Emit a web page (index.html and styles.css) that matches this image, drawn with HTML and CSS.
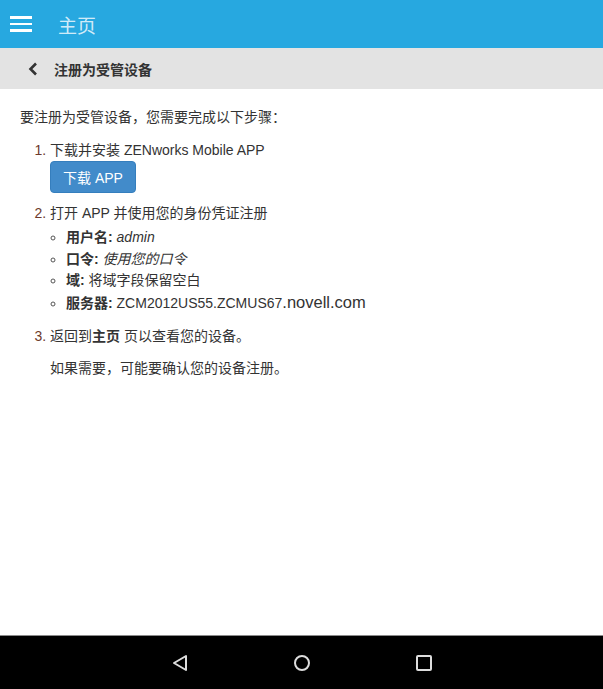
FILE: index.html
```html
<!DOCTYPE html>
<html lang="zh-CN">
<head>
<meta charset="UTF-8">
<meta name="viewport" content="width=device-width, initial-scale=1.0">
<title>主页</title>
<link rel="stylesheet" href="styles.css">
</head>
<body>
    <div class="app">
        <div class="topbar">
            <div class="menu-btn">
                <span></span><span></span><span></span>
            </div>
            <div class="topbar-title">主页</div>
        </div>
        <div class="subbar">
            <svg class="back" width="12" height="14" viewBox="0 0 12 14">
                <path d="M9 1.5 L3.5 7 L9 12.5" fill="none" stroke="#333" stroke-width="2.6"/>
            </svg>
            <span class="subbar-title">注册为受管设备</span>
        </div>
        <div class="content">
            <p class="intro">要注册为受管设备，您需要完成以下步骤：</p>
            <ol class="steps">
                <li>
                    下载并安装 ZENworks Mobile APP<br>
                    <button class="btn">下载 APP</button>
                </li>
                <li>
                    打开 APP 并使用您的身份凭证注册
                    <ul class="creds">
                        <li><b>用户名:</b> <i>admin</i></li>
                        <li><b>口令:</b> <i>使用您的口令</i></li>
                        <li><b>域:</b> 将域字段保留空白</li>
                        <li><b>服务器:</b> ZCM2012US55.ZCMUS67<span class="domain">.novell.com</span></li>
                    </ul>
                </li>
                <li>
                    返回到<b>主页</b> 页以查看您的设备。
                    <p class="note">如果需要，可能要确认您的设备注册。</p>
                </li>
            </ol>
        </div>
        <div class="navbar">
            <svg width="20" height="20" viewBox="0 0 20 20">
                <path d="M16 3 L16 17 L4 10 Z" fill="none" stroke="#ddd" stroke-width="2" stroke-linejoin="round"/>
            </svg>
            <svg width="20" height="20" viewBox="0 0 20 20">
                <circle cx="10" cy="10" r="7" fill="none" stroke="#ddd" stroke-width="2"/>
            </svg>
            <svg width="20" height="20" viewBox="0 0 20 20">
                <rect x="3" y="3" width="14" height="14" rx="1" fill="none" stroke="#ddd" stroke-width="2"/>
            </svg>
        </div>
    </div>
</body>
</html>
```
FILE: styles.css
```css
html, body {
    margin: 0;
    padding: 0;
    height: 100%;
}
body {
    font-family: "Liberation Sans", Arial, "Noto Sans CJK SC", sans-serif;
    font-size: 14px;
    color: #333;
    background: #fff;
}
.app {
    display: flex;
    flex-direction: column;
    height: 689px;
}
.topbar {
    height: 48px;
    background-color: #27a8e0;
    display: flex;
    align-items: center;
}
.menu-btn {
    width: 22px;
    margin-left: 10px;
    display: flex;
    flex-direction: column;
    gap: 4px;
}
.menu-btn span {
    display: block;
    height: 2.5px;
    background: #fff;
}
.topbar-title {
    margin-left: 26px;
    font-size: 19px;
    color: rgba(255, 255, 255, 0.8);
}
.subbar {
    height: 41px;
    background-color: #e3e3e3;
    display: flex;
    align-items: center;
}
.back {
    margin-left: 27px;
}
.subbar-title {
    margin-left: 15px;
    font-weight: bold;
    font-size: 14px;
    color: #333;
}
.content {
    flex: 1;
    padding: 18px 20px 0 20px;
    line-height: 21px;
}
.intro {
    margin: 0;
}
.steps {
    margin: 12px 0 0 0;
    padding-left: 30px;
}
.steps > li::marker {
    color: #6d3a2c;
}
.steps > li + li {
    margin-top: 10px;
}
.btn {
    margin-top: 0;
    height: 32px;
    padding: 0 12px;
    font-family: inherit;
    font-size: 14px;
    color: #fff;
    background-color: #428bca;
    border: 1px solid #357ebd;
    border-radius: 4px;
}
.creds {
    margin: 3px 0 11px 0;
    padding-left: 16px;
    list-style: circle;
}
.creds li {
    line-height: 21.7px;
}
.creds li::marker {
    color: #555;
}
.domain {
    font-size: 16.5px;
}
.note {
    margin: 11px 0 0 0;
}
.navbar {
    height: 53px;
    background: #000;
    border-top: 1px solid #8a8a8a;
    display: flex;
    align-items: center;
    justify-content: center;
    gap: 102px;
}
```
